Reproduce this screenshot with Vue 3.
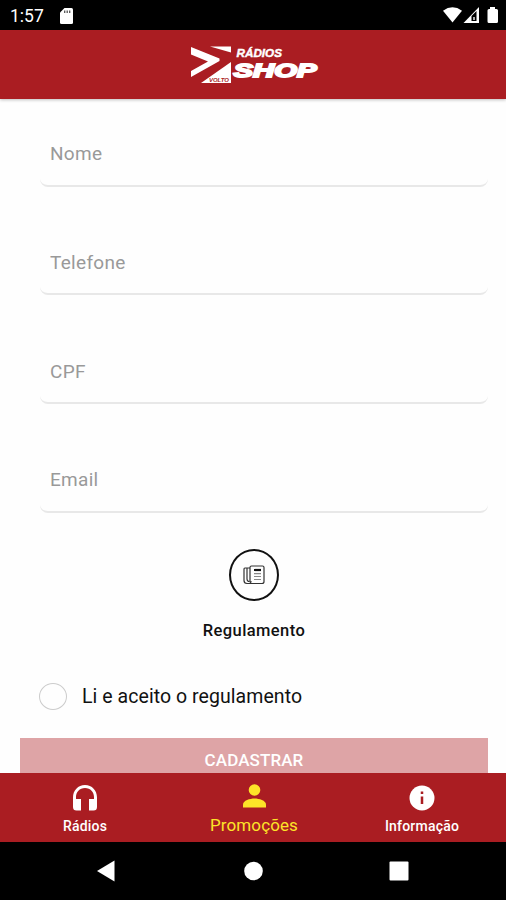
<script setup>
import { ref } from 'vue'

const fields = ref([
  { name: 'nome', label: 'Nome', value: '' },
  { name: 'telefone', label: 'Telefone', value: '' },
  { name: 'cpf', label: 'CPF', value: '' },
  { name: 'email', label: 'Email', value: '' },
])

const accepted = ref(false)
const activeTab = ref('promocoes')

const tabs = [
  { id: 'radios', label: 'Rádios' },
  { id: 'promocoes', label: 'Promoções' },
  { id: 'informacao', label: 'Informação' },
]
</script>

<template>
  <div class="screen">
    <div class="status-bar">
      <span class="clock">1:57</span>
      <svg class="sd-card" width="13" height="16" viewBox="0 0 13 16">
        <path d="M4.5 0H11.5Q13 0 13 1.500V14.500Q13 16 11.500 16H1.500Q0 16 0 14.500V4.500Z" fill="#fff" />
        <path d="M4.700 2.500V5M7.200 2.500V5M9.700 2.500V5" stroke="#555" stroke-width="1.300" />
      </svg>
      <svg class="signals" width="56" height="17" viewBox="0 0 56 17">
        <path d="M0 3.700Q9.500 -3 19 3.700L9.500 15.500Z" fill="#fff" />
        <path d="M20.500 16L36 0V16Z" fill="#fff" />
        <path d="M28.500 9L33.500 4V14H28.500Z" fill="#000" />
        <path d="M30 10H32V13H30Z" fill="#aaa" />
        <path d="M47 0H52V2H53.500Q55 2 55 3.500V14.500Q55 16 53.500 16H46Q44.500 16 44.500 14.500V3.500Q44.500 2 46 2H47Z" fill="#fff" />
      </svg>
    </div>

    <header class="header">
      <svg width="130" height="42" viewBox="0 0 130 42">
        <g fill="#fff">
          <path d="M1 3L29.500 14.500V17L1 33V27L18 17.500L1 10.500Z" />
          <path d="M20 2.500H41V8.500Z" />
          <path d="M11 39L41 18V39Z" />
        </g>
        <text class="logo-small" x="19" y="38" textLength="20" lengthAdjust="spacingAndGlyphs">VOLTO</text>
        <text class="logo-top" x="46.500" y="12.500" textLength="45.500" lengthAdjust="spacingAndGlyphs">RÁDIOS</text>
        <text class="logo-main" x="43.500" y="32.500" textLength="83" lengthAdjust="spacingAndGlyphs">SHOP</text>
      </svg>
    </header>

    <main class="content">
      <form class="form" @submit.prevent>
        <input
          v-for="field in fields"
          :key="field.name"
          v-model="field.value"
          class="field"
          :name="field.name"
          :placeholder="field.label"
        />

        <div class="rules">
          <button type="button" class="rules-button">
            <svg width="22" height="20" viewBox="0 0 22 20" fill="none" stroke="#333" stroke-width="1.200">
              <path d="M7 17V2.500Q7 1 8.500 1H19.500Q21 1 21 2.500V16.500Q21 18.500 19 18.500H6" />
              <path d="M7 3H2Q1 3 1 4.500V15.500Q1 18.500 4 18.500H6Q8 18.500 8 16" />
              <path d="M4 3V14Q4 16.500 6.500 16.500" />
              <path d="M11 5H18" stroke="#111" stroke-width="2.200" />
              <path d="M11 8.700H18M11 11.500H18M11 14.500H18" stroke="#888" />
            </svg>
          </button>
          <span class="rules-label">Regulamento</span>
        </div>

        <label class="accept">
          <input v-model="accepted" type="checkbox" class="check" />
          <span>Li e aceito o regulamento</span>
        </label>

        <button class="submit" :disabled="!accepted">CADASTRAR</button>
      </form>
    </main>

    <nav class="tabs">
      <button
        v-for="tab in tabs"
        :key="tab.id"
        class="tab"
        :class="{ active: tab.id === activeTab }"
        @click="activeTab = tab.id"
      >
        <svg v-if="tab.id === 'radios'" width="24" height="26" viewBox="0 0 24 26" fill="currentColor">
          <path d="M0 12.500C0 5.500 5 0 12 0S24 5.500 24 12.500V22Q24 25.500 20.500 25.500H16V14H21V12C21 7 17.500 3 12 3S3 7 3 12V14H8V25.500H3.500Q0 25.500 0 22Z" />
        </svg>
        <svg v-else-if="tab.id === 'promocoes'" width="23" height="24" viewBox="0 0 23 24" fill="currentColor">
          <circle cx="11.500" cy="6" r="5.800" />
          <path d="M0 23.500V20.500C0 16.500 7 14.500 11.500 14.500S23 16.500 23 20.500V23.500Z" />
        </svg>
        <svg v-else width="26" height="26" viewBox="0 0 26 26">
          <circle cx="13" cy="13" r="12.500" fill="currentColor" />
          <path d="M13 6.500V9M13 11.500V19" stroke="#aa1d22" stroke-width="2.500" />
        </svg>
        <span>{{ tab.label }}</span>
      </button>
    </nav>

    <div class="system-nav">
      <svg width="506" height="58" viewBox="0 0 506 58" fill="#fff">
        <path d="M97 29L114.500 18.500V39.500Z" />
        <circle cx="253.500" cy="29" r="9.300" />
        <rect x="389.500" y="19.500" width="19" height="19" rx="1" />
      </svg>
    </div>
  </div>
</template>

<style>
body {
  margin: 0;
  overflow: hidden;
}
</style>

<style scoped>
.screen {
  display: flex;
  flex-direction: column;
  width: 506px;
  height: 900px;
  overflow: hidden;
  background: #fefefe;
  font-family: Roboto, sans-serif;
}

.status-bar {
  display: flex;
  align-items: center;
  flex: 0 0 30px;
  box-sizing: border-box;
  padding: 1px 7px 0 10px;
  background: #000;
  color: #fff;
}

.clock {
  width: 50px;
  font-size: 17.5px;
  line-height: 29px;
  padding-top: 1px;
  box-sizing: border-box;
  height: 29px;
}

.signals {
  margin-left: auto;
}

.header {
  display: flex;
  align-items: center;
  justify-content: center;
  flex: 0 0 69px;
  box-sizing: border-box;
  padding-left: 4px;
  background: #aa1d22;
  box-shadow: 0 1px 3px rgba(0, 0, 0, 0.25);
  z-index: 1;
}

.logo-top,
.logo-main,
.logo-small {
  font-family: 'Liberation Sans', Arial, sans-serif;
  font-weight: 700;
  font-style: italic;
  fill: #fff;
}

.logo-top {
  font-size: 11px;
  stroke: #fff;
  stroke-width: 0.4;
}

.logo-main {
  font-size: 19px;
  stroke: #fff;
  stroke-width: 1.8;
}

.logo-small {
  font-size: 5px;
  fill: #aa1d22;
}

.content {
  flex: 1;
  min-height: 0;
  overflow: hidden;
}

.form {
  display: flex;
  flex-direction: column;
  padding: 22.7px 18px 0 20px;
}

.field {
  height: 65px;
  margin: 0 0 43.7px 20px;
  padding: 1px 10px 0;
  box-sizing: border-box;
  border: 0;
  border-bottom: 2px solid #e8e8e8;
  border-radius: 8px;
  outline: none;
  background: transparent;
  color: #222;
  font: 400 19px Roboto, sans-serif;
  letter-spacing: 0.3px;
}

.field::placeholder {
  color: #999;
  opacity: 1;
}

.rules {
  display: flex;
  flex-direction: column;
  align-items: center;
  margin-top: -7px;
}

.rules-button {
  display: flex;
  align-items: center;
  justify-content: center;
  width: 50px;
  height: 52px;
  padding: 0;
  border: 2px solid #111;
  border-radius: 50%;
  background: transparent;
}

.rules-label {
  margin-top: 18.5px;
  font-size: 16.5px;
  font-weight: 500;
  line-height: 22px;
  letter-spacing: 0.4px;
  color: #111;
}

.accept {
  display: flex;
  align-items: center;
  gap: 15px;
  height: 28px;
  margin: 40.5px 0 28px 19px;
  font-size: 19.5px;
  letter-spacing: 0.06px;
  color: #111;
}

.check {
  appearance: none;
  width: 28px;
  height: 27px;
  margin: 0;
  border: 1.5px solid #ccc;
  border-radius: 50%;
}

.check:checked {
  background: #aa1d22;
}

.submit {
  height: 44px;
  padding: 0 0 1px;
  border: 0;
  background: #aa1d22;
  color: #fff;
  font: 500 17px Roboto, sans-serif;
  letter-spacing: 0.1px;
}

.submit:disabled {
  background: #dea4a6;
}

.tabs {
  display: flex;
  flex: 0 0 69px;
  box-sizing: border-box;
  padding-left: 1px;
  background: #aa1d22;
}

.tab {
  display: flex;
  flex: 1;
  flex-direction: column;
  align-items: center;
  justify-content: flex-start;
  gap: 6px;
  padding: 12px 0 0;
  border: 0;
  background: transparent;
  color: #fff;
  font: 500 14px/18px Roboto, sans-serif;
  letter-spacing: 0.2px;
}

.tab.active {
  padding-top: 11px;
  padding-left: 1px;
  gap: 7px;
  color: #fde428;
  font-size: 17px;
  font-weight: 400;
  line-height: 20px;
  letter-spacing: 0.1px;
}

.system-nav {
  flex: 0 0 58px;
  background: #000;
}

.system-nav svg {
  display: block;
}
</style>
